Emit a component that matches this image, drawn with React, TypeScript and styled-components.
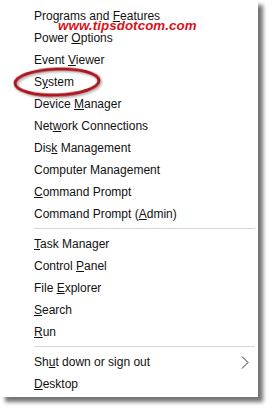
import React from "react";
import styled, { createGlobalStyle } from "styled-components";

const Global = createGlobalStyle`
  html, body { margin: 0; padding: 0; background: #ffffff; }
  body { width: 273px; height: 412px; overflow: hidden; }
`;

const Stage = styled.div`
  position: relative;
  width: 273px;
  height: 412px;
  background: #ffffff;
`;

const Menu = styled.div`
  width: 258px;
  height: 397px;
  box-sizing: border-box;
  background: #ffffff;
  box-shadow: 5px 5px 4px rgba(0, 0, 0, 0.55);
  padding: 5px 3px 0 34px;
  display: flex;
  flex-direction: column;
  font-family: "Liberation Sans", Arial, sans-serif;
  font-size: 12px;
  color: #111111;
`;

const Item = styled.div`
  height: 22px;
  display: flex;
  align-items: center;
  justify-content: space-between;
  padding-right: 6px;
  white-space: nowrap;
`;

const Key = styled.span`
  text-decoration: underline;
  text-underline-offset: 1px;
`;

const Separator = styled.div<{ $space: number }>`
  height: 1px;
  background: #d6d6d6;
  margin: ${(p) => p.$space}px 0 ${(p) => 7 - p.$space - 1 + 1}px 0;
`;

const Watermark = styled.div`
  position: absolute;
  left: 58px;
  top: 18px;
  font-family: "Liberation Sans", Arial, sans-serif;
  font-weight: bold;
  font-style: italic;
  font-size: 13.3px;
  color: #d8121b;
  letter-spacing: 0.1px;
`;

const Ring = styled.svg`
  position: absolute;
  left: 10px;
  top: 63px;
  overflow: visible;
`;

const Chevron = () => (
  <svg width="8" height="13" viewBox="0 0 8 13">
    <path d="M1 0.5 L7 6.5 L1 12.5" fill="none" stroke="#333" strokeWidth="1" />
  </svg>
);

type Entry = { pre: string; key: string; post: string; arrow?: boolean };

const group1: Entry[] = [
  { pre: "Programs and ", key: "F", post: "eatures" },
  { pre: "Power ", key: "O", post: "ptions" },
  { pre: "Event ", key: "V", post: "iewer" },
  { pre: "S", key: "y", post: "stem" },
  { pre: "Device ", key: "M", post: "anager" },
  { pre: "Net", key: "w", post: "ork Connections" },
  { pre: "Dis", key: "k", post: " Management" },
  { pre: "Computer Mana", key: "g", post: "ement" },
  { pre: "", key: "C", post: "ommand Prompt" },
  { pre: "Command Prompt (", key: "A", post: "dmin)" },
];

const group2: Entry[] = [
  { pre: "", key: "T", post: "ask Manager" },
  { pre: "Control ", key: "P", post: "anel" },
  { pre: "File ", key: "E", post: "xplorer" },
  { pre: "", key: "S", post: "earch" },
  { pre: "", key: "R", post: "un" },
];

const group3: Entry[] = [
  { pre: "Sh", key: "u", post: "t down or sign out", arrow: true },
  { pre: "", key: "D", post: "esktop" },
];

const Row = ({ e }: { e: Entry }) => (
  <Item>
    <span>
      {e.pre}
      <Key>{e.key}</Key>
      {e.post}
    </span>
    {e.arrow ? <Chevron /> : null}
  </Item>
);

export default function App() {
  return (
    <Stage>
      <Global />
      <Menu>
        {group1.map((e) => (
          <Row key={e.pre + e.key} e={e} />
        ))}
        <Separator $space={3} />
        {group2.map((e) => (
          <Row key={e.pre + e.key} e={e} />
        ))}
        <Separator $space={3} />
        {group3.map((e) => (
          <Row key={e.pre + e.key} e={e} />
        ))}
      </Menu>
      <Watermark>www.tipsdotcom.com</Watermark>
      <Ring width="94" height="36" viewBox="0 0 94 36">
        <defs>
          <filter id="sh" x="-20%" y="-40%" width="140%" height="180%">
            <feDropShadow dx="1.5" dy="1.5" stdDeviation="1" floodColor="#000" floodOpacity="0.35" />
          </filter>
        </defs>
        <ellipse
          cx="47"
          cy="19"
          rx="42"
          ry="13"
          fill="none"
          stroke="#a9141c"
          strokeWidth="3"
          filter="url(#sh)"
          transform="rotate(-2 47 19)"
        />
      </Ring>
    </Stage>
  );
}
